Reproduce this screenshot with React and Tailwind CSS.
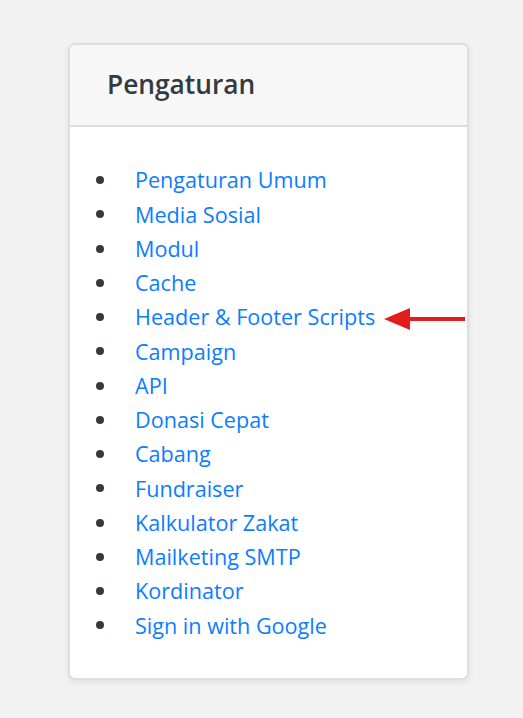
const ITEMS = [
  'Pengaturan Umum',
  'Media Sosial',
  'Modul',
  'Cache',
  'Header & Footer Scripts',
  'Campaign',
  'API',
  'Donasi Cepat',
  'Cabang',
  'Fundraiser',
  'Kalkulator Zakat',
  'Mailketing SMTP',
  'Kordinator',
  'Sign in with Google',
]

export default function App() {
  return (
    <div className="min-h-[718px] bg-[#f2f2f2] pt-[43px] pl-[68px]" style={{ fontFamily: '"Open Sans", "Noto Sans", sans-serif' }}>
      <div className="relative w-[401px] rounded-[7px] border-2 border-[#dedede] bg-white shadow-[0_2px_6px_rgba(0,0,0,0.08)] overflow-hidden">
        <div className="h-[82px] bg-[#f7f7f7] border-b-2 border-[#dedede] flex items-center pl-[37px]">
          <h2 className="text-[26.3px] font-semibold text-[#333a40]">Pengaturan</h2>
        </div>
        <ul className="pt-[36px] pb-[35px]">
          {ITEMS.map(item => (
            <li key={item} className="flex items-center h-[34.25px]">
              <span className="ml-[26px] w-[8px] h-[8px] rounded-full bg-[#343a40]" />
              <a href="#" className="ml-[31px] text-[21.6px] leading-none text-[#0d7cff]">{item}</a>
            </li>
          ))}
        </ul>
        {/* panah penanda */}
        <svg className="absolute left-[314px] top-[262px]" width="81" height="24" viewBox="0 0 81 24">
          <polygon points="0,12 26,1 26,23" fill="#e11d1d" />
          <rect x="20" y="10" width="61" height="4" fill="#e11d1d" />
        </svg>
      </div>
    </div>
  )
}
